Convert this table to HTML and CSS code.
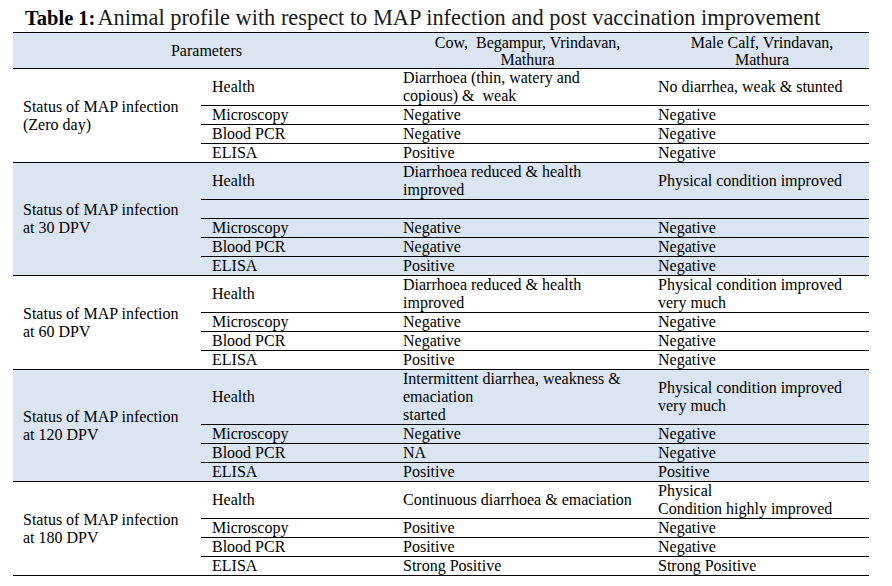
FILE: index.html
```html
<!DOCTYPE html>
<html>
<head>
<meta charset="utf-8">
<link rel="stylesheet" href="styles.css">
</head>
<body>
<div class="title"><b>Table 1:</b><span class="ttext">Animal profile with respect to MAP infection and post vaccination improvement</span></div>
<table class="tbl">
  <colgroup>
    <col class="c0"><col class="c1"><col class="c2"><col class="c3">
  </colgroup>
  <thead>
    <tr class="shade head">
      <th colspan="2" class="hp">Parameters</th>
      <th class="hc">Cow,&nbsp; Begampur, Vrindavan,<br>Mathura</th>
      <th class="hc">Male Calf, Vrindavan,<br>Mathura</th>
    </tr>
  </thead>
  <tbody>
    <tr class="tall">
      <td rowspan="4" class="st">Status of MAP infection<br>(Zero day)</td>
      <td class="pm">Health</td>
      <td class="v">Diarrhoea (thin, watery and<br>copious) &amp;&nbsp; weak</td>
      <td class="v">No diarrhea, weak &amp; stunted</td>
    </tr>
    <tr><td class="pm">Microscopy</td><td class="v">Negative</td><td class="v">Negative</td></tr>
    <tr><td class="pm">Blood PCR</td><td class="v">Negative</td><td class="v">Negative</td></tr>
    <tr class="s18"><td class="pm">ELISA</td><td class="v">Positive</td><td class="v">Negative</td></tr>
  </tbody>
  <tbody class="shade">
    <tr class="tall">
      <td rowspan="5" class="st">Status of MAP infection<br>at 30 DPV</td>
      <td class="pm">Health</td>
      <td class="v">Diarrhoea reduced &amp; health<br>improved</td>
      <td class="v">Physical condition improved</td>
    </tr>
    <tr><td class="pm"></td><td class="v"></td><td class="v"></td></tr>
    <tr><td class="pm">Microscopy</td><td class="v">Negative</td><td class="v">Negative</td></tr>
    <tr><td class="pm">Blood PCR</td><td class="v">Negative</td><td class="v">Negative</td></tr>
    <tr class="s18"><td class="pm">ELISA</td><td class="v">Positive</td><td class="v">Negative</td></tr>
  </tbody>
  <tbody>
    <tr class="tall">
      <td rowspan="4" class="st">Status of MAP infection<br>at 60 DPV</td>
      <td class="pm">Health</td>
      <td class="v">Diarrhoea reduced &amp; health<br>improved</td>
      <td class="v">Physical condition improved<br>very much</td>
    </tr>
    <tr><td class="pm">Microscopy</td><td class="v">Negative</td><td class="v">Negative</td></tr>
    <tr class="s18"><td class="pm">Blood PCR</td><td class="v">Negative</td><td class="v">Negative</td></tr>
    <tr><td class="pm">ELISA</td><td class="v">Positive</td><td class="v">Negative</td></tr>
  </tbody>
  <tbody class="shade">
    <tr class="taller">
      <td rowspan="4" class="st">Status of MAP infection<br>at 120 DPV</td>
      <td class="pm">Health</td>
      <td class="v">Intermittent diarrhea, weakness &amp;<br>emaciation<br>started</td>
      <td class="v">Physical condition improved<br>very much</td>
    </tr>
    <tr><td class="pm">Microscopy</td><td class="v">Negative</td><td class="v">Negative</td></tr>
    <tr><td class="pm">Blood PCR</td><td class="v">NA</td><td class="v">Negative</td></tr>
    <tr><td class="pm">ELISA</td><td class="v">Positive</td><td class="v">Positive</td></tr>
  </tbody>
  <tbody>
    <tr class="tall">
      <td rowspan="4" class="st">Status of MAP infection<br>at 180 DPV</td>
      <td class="pm">Health</td>
      <td class="v">Continuous diarrhoea &amp; emaciation</td>
      <td class="v">Physical<br>Condition highly improved</td>
    </tr>
    <tr><td class="pm">Microscopy</td><td class="v">Positive</td><td class="v">Negative</td></tr>
    <tr><td class="pm">Blood PCR</td><td class="v">Positive</td><td class="v">Negative</td></tr>
    <tr class="s18"><td class="pm">ELISA</td><td class="v">Strong Positive</td><td class="v">Strong Positive</td></tr>
  </tbody>
</table>
</body>
</html>
```

FILE: styles.css
```css
html, body {
  margin: 0;
  padding: 0;
  background: #ffffff;
}

body {
  font-family: "Liberation Serif", "Times New Roman", serif;
  color: #000000;
  padding: 4px 0 0 13px;
}

.title {
  font-size: 20.5px;
  line-height: 27px;
  padding-left: 12px;
  color: #111111;
  white-space: nowrap;
}

.title b {
  font-weight: bold;
  color: #000000;
}

.ttext {
  font-size: 22.4px;
  margin-left: 2px;
  color: #1a1a1a;
}

.tbl {
  border-collapse: collapse;
  width: 856px;
  table-layout: fixed;
  font-size: 16px;
  line-height: 18px;
  border-top: 1px solid #000;
  border-bottom: 1px solid #000;
}

.c0 { width: 188px; }
.c1 { width: 199px; }
.c2 { width: 255px; }
.c3 { width: 214px; }

.tbl td, .tbl th {
  padding: 0;
  height: 18px;
  vertical-align: middle;
  border-top: 1px solid #000;
  white-space: nowrap;
}

.shade {
  background: #dbe5f1;
}

.head th {
  height: 35px;
  font-weight: normal;
  text-align: center;
  border-bottom: 1px solid #000;
  line-height: 17px;
}

.tall td {
  height: 36px;
}

.taller td {
  height: 54px;
}

.s18 td {
  height: 17px;
}

.st {
  padding-left: 10px !important;
  text-align: left;
}

.tbl td.st {
  height: auto;
}

.pm {
  padding-left: 11px !important;
}

.v {
  padding-left: 3px !important;
}
```
